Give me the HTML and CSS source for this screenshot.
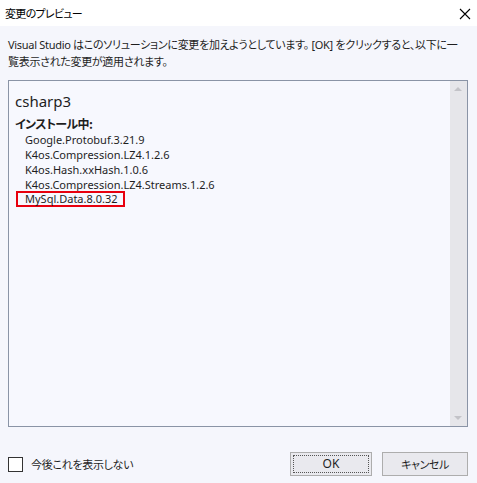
FILE: index.html
```html
<!DOCTYPE html>
<html lang="ja">
<head>
<meta charset="utf-8">
<link rel="stylesheet" href="styles.css">
</head>
<body>
<div class="dialog">
  <div class="titlebar">
    <span class="title">変更のプレビュー</span>
    <svg class="close" width="12" height="12" viewBox="0 0 12 12"><path d="M1 1L11 11M11 1L1 11" stroke="#000" stroke-width="1.1" fill="none"/></svg>
  </div>
  <div class="content">
    <p class="desc">Visual Studio はこのソリューションに変更を加えようとしています。 [OK] をクリックすると、以下に一<br>覧表示された変更が適用されます。</p>
    <div class="listbox">
      <div class="list-inner">
        <div class="project">csharp3</div>
        <div class="section">インストール中:</div>
        <ul class="items">
          <li>Google.Protobuf.3.21.9</li>
          <li>K4os.Compression.LZ4.1.2.6</li>
          <li>K4os.Hash.xxHash.1.0.6</li>
          <li>K4os.Compression.LZ4.Streams.1.2.6</li>
          <li><span class="highlight">MySql.Data.8.0.32</span></li>
        </ul>
      </div>
      <div class="scrollbar">
        <span class="arrow up"></span>
        <span class="arrow down"></span>
      </div>
    </div>
    <div class="footer">
      <label class="check"><span class="box"></span>今後これを表示しない</label>
      <div class="buttons">
        <button class="btn ok"><span class="focus">OK</span></button>
        <button class="btn cancel">キャンセル</button>
      </div>
    </div>
  </div>
</div>
</body>
</html>
```

FILE: styles.css
```css
html, body {
  margin: 0;
  padding: 0;
  background: #f5f6fc;
}
body {
  font-family: "Noto Sans", "Noto Sans CJK JP", sans-serif;
  font-size: 12px;
  color: #1e1e1e;
}
.title, .desc, .section, .check, .btn {
  font-feature-settings: "palt" 1;
}
.dialog {
  width: 477px;
  height: 483px;
  display: flex;
  flex-direction: column;
}
.titlebar {
  height: 26px;
  background: #ffffff;
  display: flex;
  align-items: center;
  justify-content: space-between;
  padding: 0 6px 0 5px;
  box-sizing: border-box;
}
.title {
  font-size: 11px;
  letter-spacing: -0.7px;
  color: #000;
  font-family: "Noto Sans CJK JP", sans-serif;
}
.close {
  display: block;
  margin-top: 1px;
}
.content {
  flex: 1;
  padding: 10px 9px 0 8px;
  display: flex;
  flex-direction: column;
}
.desc {
  margin: 0;
  line-height: 17px;
  font-family: "Noto Sans", "Noto Sans CJK JP", sans-serif;
  font-size: 11px;
  color: #1e1e1e;
  letter-spacing: -0.3px;
  white-space: nowrap;
}
.listbox {
  margin-top: 10px;
  height: 347px;
  border: 1px solid #8a94a6;
  background: #f7f8fe;
  display: flex;
  box-sizing: border-box;
}
.list-inner {
  flex: 1;
  padding: 10px 0 0 6px;
}
.project {
  font-size: 15px;
  line-height: 20px;
  color: #1e1e1e;
}
.section {
  margin-top: 5px;
  font-weight: bold;
  font-size: 12px;
  line-height: 16px;
  letter-spacing: -0.6px;
  font-family: "Noto Sans CJK JP", sans-serif;
}
.items {
  list-style: none;
  margin: 0;
  padding: 0 0 0 10px;
}
.items li {
  line-height: 15px;
  height: 15px;
  font-size: 11px;
}
.highlight {
  display: inline-block;
  border: 2px solid #e8000e;
  margin-left: -9px;
  margin-top: -1px;
  padding: 0 5px 0 7px;
  line-height: 12px;
  vertical-align: top;
}
.scrollbar {
  width: 17px;
  background: #e6e6ea;
  position: relative;
}
.arrow {
  position: absolute;
  left: 4px;
  width: 0;
  height: 0;
  border-left: 4px solid transparent;
  border-right: 4px solid transparent;
}
.arrow.up {
  top: 6px;
  border-bottom: 4px solid #c3c3c8;
}
.arrow.down {
  bottom: 6px;
  border-top: 4px solid #c3c3c8;
}
.footer {
  display: flex;
  justify-content: space-between;
  align-items: center;
  margin-top: 25px;
}
.check {
  display: flex;
  align-items: center;
  font-family: "Noto Sans CJK JP", sans-serif;
  font-size: 11px;
  letter-spacing: -0.3px;
}
.box {
  width: 13px;
  height: 13px;
  border: 1px solid #333;
  background: #fff;
  margin-right: 8px;
}
.buttons {
  display: flex;
  gap: 10px;
}
.btn {
  height: 24px;
  border: 1px solid #adadad;
  background: #e9e9ee;
  font-family: "Noto Sans CJK JP", sans-serif;
  font-size: 11px;
  letter-spacing: -0.4px;
  color: #1e1e1e;
  padding: 0;
  box-sizing: border-box;
}
.ok {
  width: 82px;
  padding: 2px;
}
.ok .focus {
  display: block;
  height: 100%;
  border: 1px dotted #555;
  box-sizing: border-box;
  line-height: 16px;
  font-size: 12px;
  letter-spacing: 0;
  font-family: "Noto Sans", sans-serif;
}
.cancel {
  width: 86px;
}
```
